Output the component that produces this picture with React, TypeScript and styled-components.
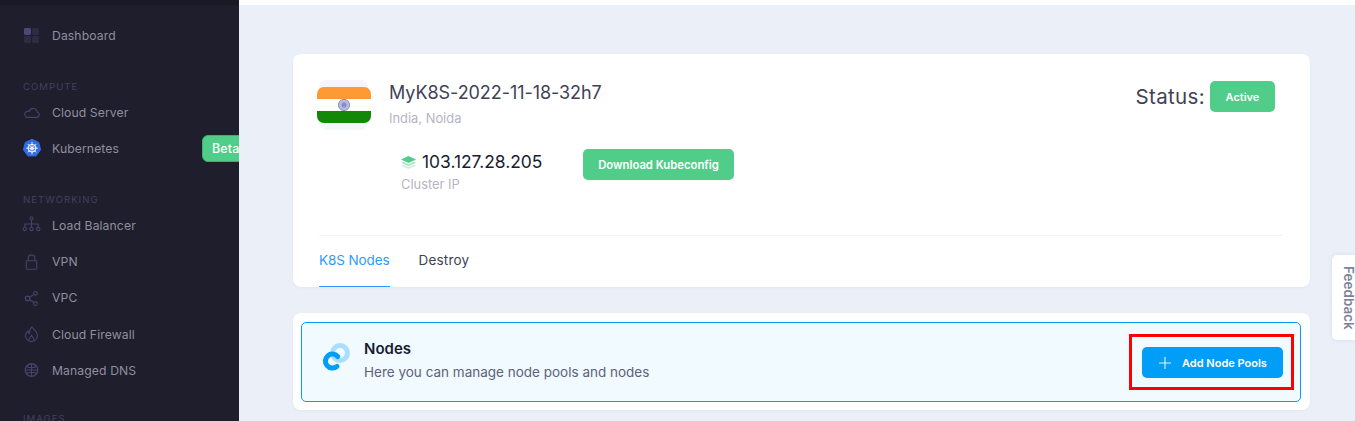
import React from "react";
import styled, { createGlobalStyle } from "styled-components";

const Global = createGlobalStyle`
  html, body { margin: 0; padding: 0; height: 421px; overflow: hidden; background: #ebf0f8; }
  * { box-sizing: border-box; }
  body { font-family: Inter, "Open Sans", "Liberation Sans", sans-serif; }
`;

const Page = styled.div`
  display: flex;
  width: 1355px;
  height: 421px;
  overflow: hidden;
  position: relative;
`;

const Sidebar = styled.aside`
  width: 239px;
  flex: none;
  height: 421px;
  overflow: hidden;
  background: #1e1e2d;
  border-top: 5px solid #1a1a27;
  padding-top: 17px;
`;

const NavItem = styled.div`
  display: flex;
  align-items: center;
  height: 26px;
  padding-left: 22px;
  margin-bottom: 10.3px;
  color: #8f8f9f;
  font-size: 12.2px;
  letter-spacing: 0.1px;
`;

const NavIcon = styled.span`
  width: 19px;
  height: 20px;
  display: flex;
  align-items: center;
  justify-content: center;
  margin-right: 11px;
  flex: none;
`;

const Section = styled.div<{ $top: number; $bottom: number }>`
  color: #42425c;
  font-size: 9.6px;
  letter-spacing: 1px;
  line-height: 12px;
  padding-left: 23px;
  margin-top: ${(p) => p.$top}px;
  margin-bottom: ${(p) => p.$bottom}px;
`;

const Beta = styled.span`
  margin-left: auto;
  margin-right: -12px;
  flex: none;
  width: 49px;
  height: 27px;
  padding-left: 9px;
  display: flex;
  align-items: center;
  background: #50cd89;
  border: 1px solid #3fae74;
  border-radius: 6px;
  color: #fff;
  font-size: 12.5px;
  font-weight: 500;
`;

const Main = styled.main`
  flex: 1;
  min-width: 0;
  border-top: 5px solid #fff;
  padding: 49px 45px 0 54px;
`;

const Card = styled.section`
  background: #fff;
  border-radius: 8px;
  box-shadow: 0 1px 3px rgba(120, 130, 160, 0.08);
`;

const ClusterCard = styled(Card)`
  height: 233px;
  padding: 26px 27px 0 24px;
  display: flex;
  flex-direction: column;
`;

const TopRow = styled.div`
  display: flex;
  align-items: flex-start;
`;

const FlagTile = styled.div`
  width: 49px;
  height: 50px;
  border-radius: 8px;
  background: #f3f7fb;
  display: flex;
  align-items: center;
  flex: none;
  margin: 0 21px 0 2px;
`;

const FlagSvg = styled.svg`
  flex: none;
  margin-left: -2px;
`;

const TitleBlock = styled.div`
  flex: 1;
  padding-top: 1px;
`;

const Title = styled.div`
  color: #3f4254;
  font-size: 18px;
  line-height: 24px;
  letter-spacing: -0.06px;
`;

const Sub = styled.div`
  color: #b5b5c3;
  font-size: 12.9px;
  line-height: 18px;
  margin-top: 5px;
`;

const ClusterLabel = styled(Sub)`
  margin-top: 2px;
`;

const StatusWrap = styled.div`
  display: flex;
  align-items: center;
  margin-top: 1px;
  margin-right: 8px;
  gap: 5px;
`;

const StatusLabel = styled.span`
  color: #3f4254;
  font-size: 20.5px;
  letter-spacing: 0.35px;
`;

const GreenPill = styled.span`
  display: inline-flex;
  align-items: center;
  justify-content: center;
  background: #50cd89;
  color: #fff;
  font-weight: 600;
  font-size: 11px;
  border-radius: 5px;
`;

const ActivePill = styled(GreenPill)`
  width: 65px;
  height: 31px;
`;

const InfoRow = styled.div`
  display: flex;
  align-items: flex-start;
  margin: 19px 0 0 84px;
`;

const IpBlock = styled.div`
  width: 182px;
  padding-top: 1px;
`;

const IpLine = styled.div`
  display: flex;
  align-items: center;
  gap: 6px;
  color: #181c32;
  font-size: 17.4px;
  line-height: 24px;
`;

const DownloadButton = styled(GreenPill)`
  width: 151px;
  height: 31px;
  font-size: 11.3px;
`;

const Divider = styled.hr`
  margin: auto 0 0 2px;
  border: 0;
  border-top: 1px solid #eff2f5;
  width: 964px;
`;

const Tabs = styled.nav`
  display: flex;
  gap: 29px;
  height: 51px;
  margin-left: 2px;
`;

const Tab = styled.div<{ $active?: boolean }>`
  display: flex;
  align-items: center;
  padding-bottom: 2px;
  font-size: 13.5px;
  letter-spacing: ${(p) => (p.$active ? "-0.1px" : "0.2px")};
  color: ${(p) => (p.$active ? "#2e9bff" : "#3f4254")};
  border-bottom: 1px solid ${(p) => (p.$active ? "#2e9bff" : "transparent")};
`;

const NodesCard = styled(Card)`
  margin-top: 26px;
  height: 97px;
  padding: 9px 9px 9px 8px;
`;

const Banner = styled.div`
  height: 80px;
  border: 1px solid #009ef7;
  border-radius: 5px;
  background: #f1faff;
  display: flex;
  align-items: center;
  padding: 0 6px 0 20px;
`;

const BannerIcon = styled.div`
  width: 28px;
  height: 28px;
  margin: 0 14px 10px 0;
  flex: none;
  display: flex;
`;

const BannerText = styled.div`
  flex: 1;
  margin-bottom: 5px;
`;

const BannerTitle = styled.div`
  color: #181c32;
  font-size: 15px;
  font-weight: 600;
  line-height: 20px;
`;

const BannerSub = styled.div`
  color: #5e6278;
  font-size: 13.5px;
  line-height: 18px;
  margin-top: 4px;
`;

const Highlight = styled.div`
  border: 3px solid #f00;
  padding: 10px 8px 9px 10px;
  width: 165px;
  height: 56px;
  flex: none;
  display: flex;
  align-items: center;
`;

const AddButton = styled.div`
  width: 141px;
  height: 31px;
  background: #009ef7;
  color: #fff;
  border-radius: 5px;
  display: flex;
  align-items: center;
  padding-left: 17px;
  gap: 11px;
  font-size: 11px;
  font-weight: 600;
`;

const Feedback = styled.div`
  position: absolute;
  right: 0;
  top: 255px;
  width: 23px;
  height: 85px;
  background: #fff;
  border-radius: 5px 0 0 5px;
  box-shadow: 0 0 5px rgba(120, 130, 160, 0.18);
  writing-mode: vertical-rl;
  display: flex;
  align-items: center;
  justify-content: center;
  padding-left: 10px;
  color: #7e8299;
  font-size: 13.5px;
  font-weight: 600;
`;

const c = "#44446e";

const Icon = ({ children }: { children: React.ReactNode }) => (
  <svg width="20" height="20" viewBox="0 0 20 20" fill="none" stroke={c} strokeWidth="1.15">
    {children}
  </svg>
);

const DashIcon = () => (
  <svg width="15" height="15" viewBox="0 0 16 16">
    <rect x="0" y="0" width="7.4" height="7.4" rx="1.5" fill="#4a4a7a" />
    <rect x="8.6" y="0" width="7.4" height="7.4" rx="1.5" fill="#2c2c44" />
    <rect x="0" y="8.6" width="7.4" height="7.4" rx="1.5" fill="#2c2c44" />
    <rect x="8.6" y="8.6" width="7.4" height="7.4" rx="1.5" fill="#2c2c44" />
  </svg>
);

const CloudIcon = () => (
  <Icon>
    <path d="M4.800 15.700h10.600a2.800 2.800 0 0 0 .6-5.500 4.100 4.100 0 0 0-4.100-4 4.600 4.600 0 0 0-4.400 3.200 3.300 3.300 0 0 0-4.600 3.100 3.200 3.200 0 0 0 1.900 3.200z" />
  </Icon>
);

const KubeIcon = () => (
  <svg width="18" height="18" viewBox="0 0 18 18">
    <path d="M9 0.3 15.7 3.4 17.6 10.8 13 16.9H5L0.4 10.8 2.3 3.4z" fill="#326ce5" stroke="#326ce5" strokeLinejoin="round" />
    <g stroke="#fff" strokeWidth="1" fill="none">
      <circle cx="9" cy="9.2" r="3.9" />
      <path d="M9 3v12.4M3.2 9.2h11.6M4.9 5.1l8.2 8.2M13.1 5.1l-8.2 8.2" strokeWidth="0.9" />
    </g>
    <circle cx="9" cy="9.2" r="1.2" fill="#fff" />
  </svg>
);

const LbIcon = () => (
  <Icon>
    <g transform="translate(0 -0.5)">
      <circle cx="10" cy="3.500" r="1.700" />
      <path d="M10 5.200V9.500M3 12.500V9.500H17V12.500M10 9.500V12.500" />
      <circle cx="2.900" cy="14.600" r="1.800" />
      <circle cx="10" cy="14.600" r="1.800" />
      <circle cx="17.100" cy="14.600" r="1.800" />
    </g>
  </Icon>
);

const LockIcon = () => (
  <Icon>
    <rect x="4.500" y="8.700" width="11" height="9" rx="0.800" />
    <path d="M6.500 8.700V6a3.500 3.500 0 0 1 7 0v2.700" />
  </Icon>
);

const ShareIcon = () => (
  <Icon>
    <circle cx="5.900" cy="10.400" r="2.400" />
    <circle cx="14.200" cy="5.100" r="1.900" />
    <circle cx="14.200" cy="16" r="1.900" />
    <path d="M8 9.200 12.500 6.200M8 11.600 12.500 14.800" />
  </Icon>
);

const FireIcon = () => (
  <Icon>
    <path d="M10.500 2.500c.6 2.400 5.800 4.500 5.800 9.500a6.300 6.300 0 0 1-6.300 6 6.300 6.300 0 0 1-6.300-6c0-2.400 1.200-4 2.500-5.200.2 1.500.8 2.300 1.700 2.700C7.800 6.500 8.700 4 10.500 2.500z" />
    <path d="M7.500 17c-1-2.500 1.500-3 2.500-5.500 1.200 1.800 3.300 3 2.200 5.500" />
  </Icon>
);

const GlobeIcon = () => (
  <Icon>
    <circle cx="10" cy="10" r="6.600" strokeWidth="1.400" />
    <path d="M3.400 10h13.200M10 3.400v13.200M4.700 6.400c3 1.400 7.600 1.400 10.600 0M4.700 13.600c3-1.400 7.600-1.400 10.600 0" />
  </Icon>
);

const Flag = () => (
  <FlagSvg width="54" height="36" viewBox="0 0 54 36">
    <defs>
      <clipPath id="flagClip">
        <rect width="54" height="36" rx="7" />
      </clipPath>
    </defs>
    <g clipPath="url(#flagClip)">
      <rect width="54" height="12" fill="#ff9933" />
      <rect y="12" width="54" height="12" fill="#fdfff8" />
      <rect y="24" width="54" height="12" fill="#138808" />
    </g>
    <circle cx="27" cy="18" r="5.600" fill="#b9b9e0" stroke="#9292c4" />
    <circle cx="27" cy="18" r="2.500" fill="#8a8ad0" />
  </FlagSvg>
);

const LayersIcon = () => (
  <svg width="15" height="13" viewBox="0 0 15 13">
    <path d="M7.500 0 15 3.500 7.500 7 0 3.500z" fill="#50cd89" />
    <path d="M2 5.700 7.500 8.200 13 5.700 15 6.700 7.500 10.200 0 6.700z" fill="#a8e6c4" />
    <path d="M2 8.700 7.500 11.200 13 8.700 15 9.700 7.500 13 0 9.700z" fill="#cdf0dd" />
  </svg>
);

const LinkIcon = () => (
  <svg width="28" height="28" viewBox="0 0 28 28" fill="none">
    <circle cx="18" cy="10" r="7.500" stroke="#a9deff" strokeWidth="5" />
    <path
      d="M15.700 13.500 A7 7 0 1 0 15 23.400"
      stroke="#009ef7"
      strokeWidth="5"
      strokeLinecap="round"
    />
  </svg>
);

const Plus = () => (
  <svg width="12" height="12" viewBox="0 0 12 12" stroke="#e4f4ff" strokeWidth="1.100">
    <path d="M6 0v12M0 6h12" />
  </svg>
);

export default function App() {
  return (
    <Page>
      <Global />
      <Sidebar>
        <NavItem>
          <NavIcon><DashIcon /></NavIcon>Dashboard
        </NavItem>
        <Section $top={33} $bottom={6}>COMPUTE</Section>
        <NavItem><NavIcon><CloudIcon /></NavIcon>Cloud Server</NavItem>
        <NavItem>
          <NavIcon><KubeIcon /></NavIcon>Kubernetes<Beta>Beta</Beta>
        </NavItem>
        <Section $top={33} $bottom={6}>NETWORKING</Section>
        <NavItem><NavIcon><LbIcon /></NavIcon>Load Balancer</NavItem>
        <NavItem><NavIcon><LockIcon /></NavIcon>VPN</NavItem>
        <NavItem><NavIcon><ShareIcon /></NavIcon>VPC</NavItem>
        <NavItem><NavIcon><FireIcon /></NavIcon>Cloud Firewall</NavItem>
        <NavItem><NavIcon><GlobeIcon /></NavIcon>Managed DNS</NavItem>
        <Section $top={30} $bottom={6}>IMAGES</Section>
      </Sidebar>
      <Main>
        <ClusterCard>
          <TopRow>
            <FlagTile><Flag /></FlagTile>
            <TitleBlock>
              <Title>MyK8S-2022-11-18-32h7</Title>
              <Sub>India, Noida</Sub>
            </TitleBlock>
            <StatusWrap>
              <StatusLabel>Status:</StatusLabel>
              <ActivePill>Active</ActivePill>
            </StatusWrap>
          </TopRow>
          <InfoRow>
            <IpBlock>
              <IpLine><LayersIcon />103.127.28.205</IpLine>
              <ClusterLabel>Cluster IP</ClusterLabel>
            </IpBlock>
            <DownloadButton>Download Kubeconfig</DownloadButton>
          </InfoRow>
          <Divider />
          <Tabs>
            <Tab $active>K8S Nodes</Tab>
            <Tab>Destroy</Tab>
          </Tabs>
        </ClusterCard>
        <NodesCard>
          <Banner>
            <BannerIcon><LinkIcon /></BannerIcon>
            <BannerText>
              <BannerTitle>Nodes</BannerTitle>
              <BannerSub>Here you can manage node pools and nodes</BannerSub>
            </BannerText>
            <Highlight>
              <AddButton><Plus />Add Node Pools</AddButton>
            </Highlight>
          </Banner>
        </NodesCard>
      </Main>
      <Feedback>Feedback</Feedback>
    </Page>
  );
}
